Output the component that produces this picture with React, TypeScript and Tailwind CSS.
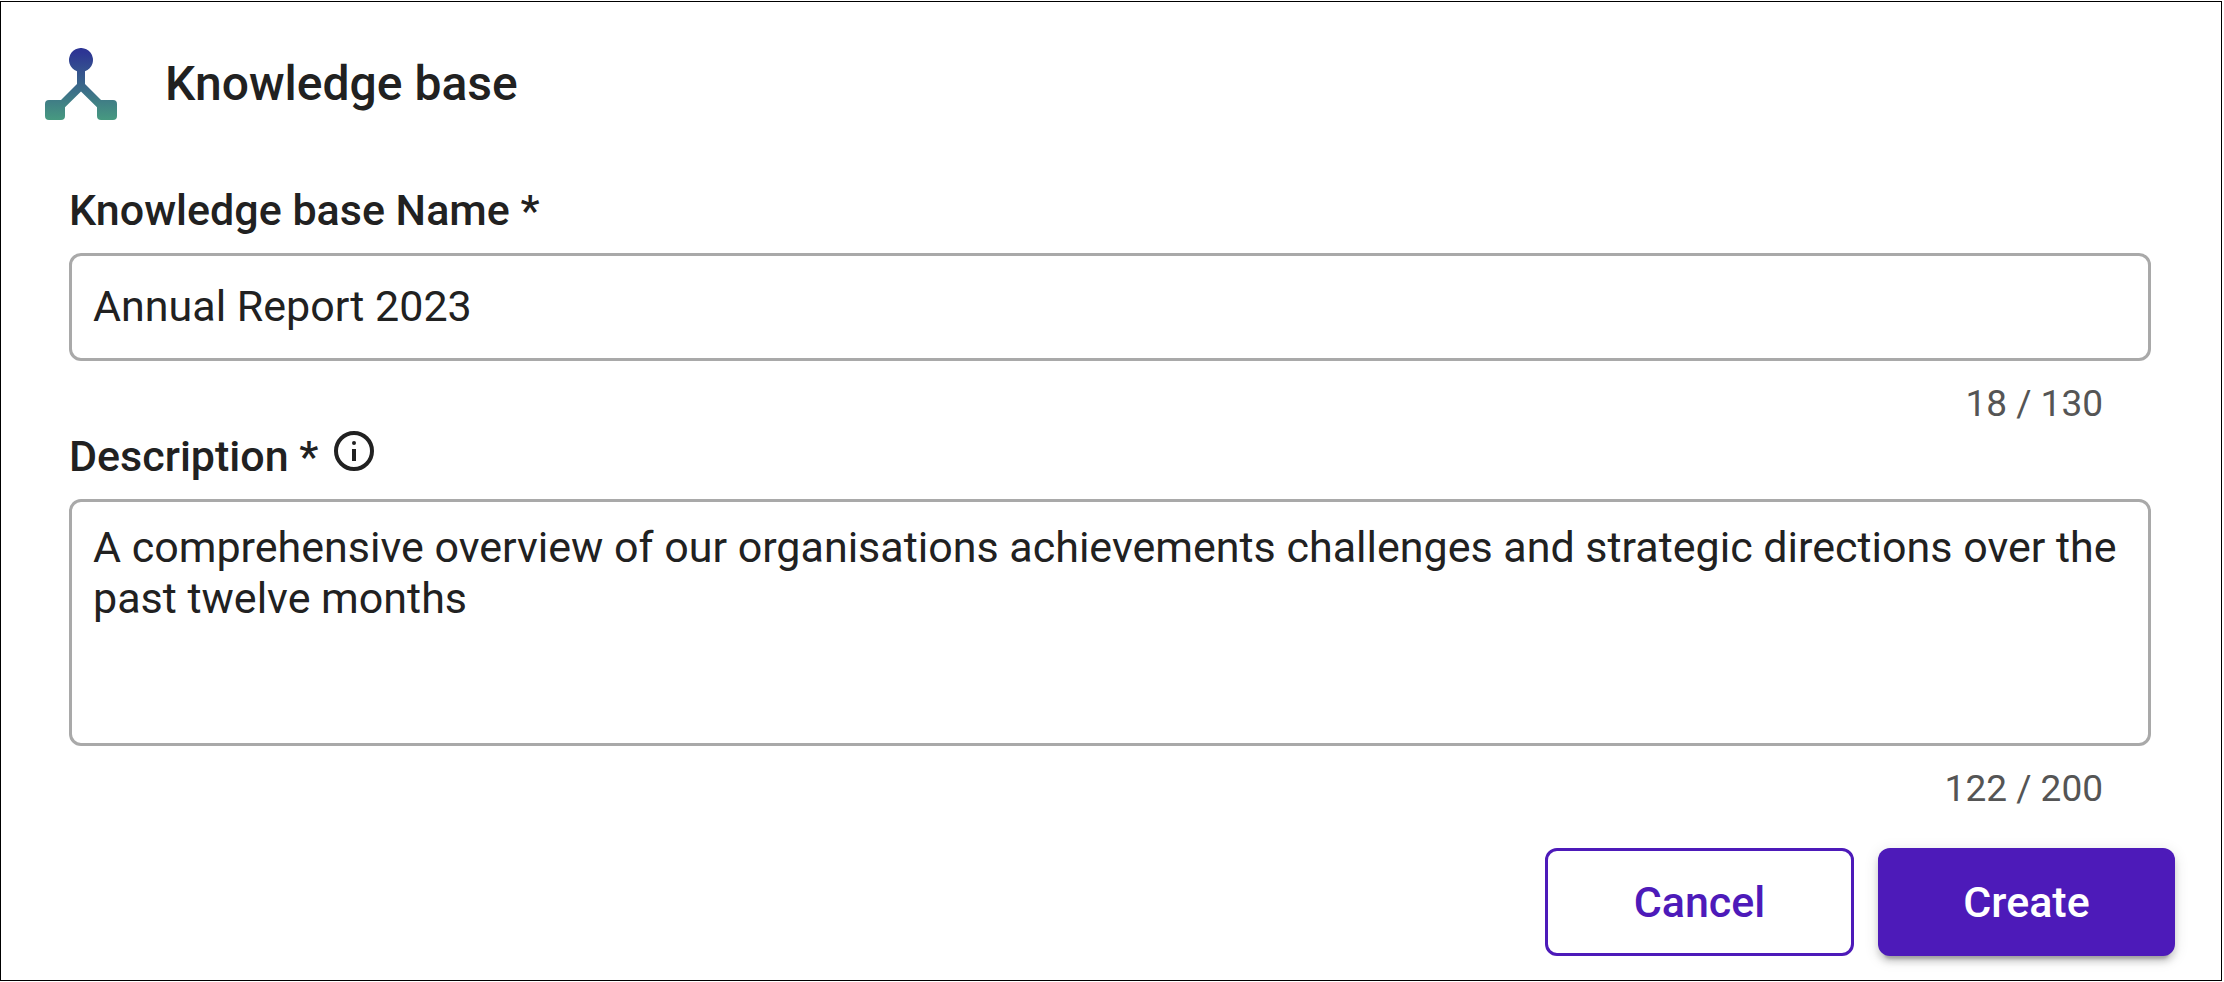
import { useState } from "react";

function KnowledgeIcon() {
  return (
    <svg viewBox="0 0 72 72" className="size-[72px] shrink-0" aria-hidden="true">
      <defs>
        <linearGradient id="node-fill" gradientUnits="userSpaceOnUse" x1="36" y1="4" x2="36" y2="72">
          <stop offset="0" stopColor="#2d3594" />
          <stop offset="1" stopColor="#479a80" />
        </linearGradient>
      </defs>
      <path
        fill="url(#node-fill)"
        d="M40 23.3V36L56 52H68a4 4 0 0 1 4 4V68a4 4 0 0 1-4 4H56a4 4 0 0 1-4-4V59.3L36 43.6L20 59.3V68a4 4 0 0 1-4 4H4a4 4 0 0 1-4-4V56a4 4 0 0 1 4-4H16L32 36V23.3A12 12 0 1 1 40 23.3Z"
      />
    </svg>
  );
}

function InfoIcon() {
  return (
    <svg viewBox="0 0 24 24" className="size-12 shrink-0" role="img" aria-label="Info">
      <circle cx="12" cy="12" r="9" fill="none" stroke="currentColor" strokeWidth="2" />
      <circle cx="12" cy="8" r="1" fill="currentColor" />
      <path d="M11 11h2v6h-2z" fill="currentColor" />
    </svg>
  );
}

const field =
  "mt-[19px] block w-full rounded-xl border-3 border-[#a9a9a9] bg-white px-[21px] text-[43px] outline-none focus:border-[#4d1ab9]";

const counter = "mt-5 pr-12 text-right text-[37px] leading-[46px] text-[#555555]";

export default function App() {
  const [name, setName] = useState("Annual Report 2023");
  const [description, setDescription] = useState(
    "A comprehensive overview of our organisations achievements challenges and strategic directions over the past twelve months"
  );

  return (
    <div className="bg-white pt-px pr-0.5 pb-px font-['Roboto',sans-serif] text-[#212121]">
      <form
        className="border border-black"
        onSubmit={(event) => event.preventDefault()}
      >
        <header className="flex items-center gap-12 pt-[46px] pl-11">
          <KnowledgeIcon />
          <h1 className="text-[48px] leading-[48px] font-medium">Knowledge base</h1>
        </header>

        <div className="mt-[66px] pr-[70px] pl-[68px]">
          <label htmlFor="kb-name" className="block text-[43px] leading-[48px] font-medium">
            Knowledge base Name *
          </label>
          <input
            id="kb-name"
            type="text"
            maxLength={130}
            value={name}
            onChange={(event) => setName(event.target.value)}
            className={`${field} h-[108px] pb-0.5`}
          />
          <p className={counter}>{name.length} / 130</p>

          <div className="flex h-[53px] justify-start gap-3">
            <label htmlFor="kb-description" className="self-end text-[43px] leading-[48px] font-medium">
              Description *
            </label>
            <InfoIcon />
          </div>
          <textarea
            id="kb-description"
            maxLength={200}
            value={description}
            onChange={(event) => setDescription(event.target.value)}
            className={`${field} h-[247px] resize-none py-5 leading-[51px]`}
          />
          <p className={counter}>{description.length} / 200</p>
        </div>

        <div className="mt-9 flex justify-end gap-6 pr-[46px] pb-6 text-[43px] leading-[48px] font-medium">
          <button
            type="button"
            className="h-[108px] w-[309px] rounded-xl border-3 border-[#4d1ab9] bg-white text-[#4d1ab9]"
          >
            Cancel
          </button>
          <button
            type="submit"
            className="h-[108px] w-[297px] rounded-xl bg-[#4d1ab9] text-white shadow-[0_9px_3px_-6px_rgba(0,0,0,0.2),0_6px_6px_0_rgba(0,0,0,0.14),0_3px_15px_0_rgba(0,0,0,0.12)]"
          >
            Create
          </button>
        </div>
      </form>
    </div>
  );
}
